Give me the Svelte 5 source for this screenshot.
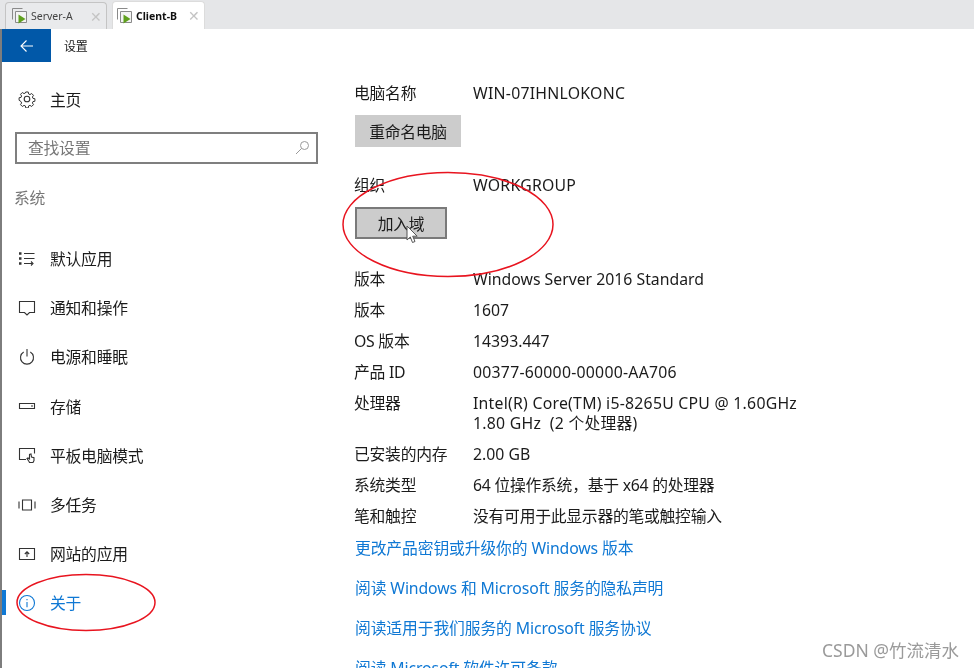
<script>
	const navItems = [
		{ label: '默认应用', icon: 'apps' },
		{ label: '通知和操作', icon: 'notify' },
		{ label: '电源和睡眠', icon: 'power' },
		{ label: '存储', icon: 'storage' },
		{ label: '平板电脑模式', icon: 'tablet' },
		{ label: '多任务', icon: 'multi' },
		{ label: '网站的应用', icon: 'web' },
		{ label: '关于', icon: 'about', active: true }
	];

	const specs = [
		{ key: '版本', value: 'Windows Server 2016 Standard', spacing: 'plain' },
		{ key: '版本', value: '1607', spacing: 'plain' },
		{ key: 'OS 版本', value: '14393.447', spacing: 'plain' },
		{ key: '产品 ID', value: '00377-60000-00000-AA706', spacing: 'wide' },
		{ key: '处理器', value: 'Intel(R) Core(TM) i5-8265U CPU @ 1.60GHz\n1.80 GHz  (2 个处理器)', spacing: 'wide' },
		{ key: '已安装的内存', value: '2.00 GB', spacing: 'plain' },
		{ key: '系统类型', value: '64 位操作系统，基于 x64 的处理器', spacing: '' },
		{ key: '笔和触控', value: '没有可用于此显示器的笔或触控输入', spacing: '' }
	];

	const links = [
		'更改产品密钥或升级你的 Windows 版本',
		'阅读 Windows 和 Microsoft 服务的隐私声明',
		'阅读适用于我们服务的 Microsoft 服务协议',
		'阅读 Microsoft 软件许可条款'
	];
</script>

{#snippet vmIcon()}
	<svg class="vm-icon" width="18" height="18" viewBox="0 0 18 18">
		<path d="M1.500 12.500v-11h10" fill="none" stroke="#8a8a8a" />
		<path d="M4.500 15.500v-11h11v11z" fill="#f4f4f4" stroke="#8a8a8a" />
		<path d="M7.500 7.500v9l7-4.500z" fill="#5fa01e" />
	</svg>
{/snippet}

<div class="page">
	<div class="tabs">
		<div class="tab">
			{@render vmIcon()}
			<span class="tab-name">Server-A</span>
			<span class="tab-x">✕</span>
		</div>
		<div class="tab current">
			{@render vmIcon()}
			<span class="tab-name">Client-B</span>
			<span class="tab-x">✕</span>
		</div>
	</div>

	<div class="window">
		<div class="titlebar">
			<div class="back">
				<svg width="16" height="14" viewBox="0 0 16 14" fill="none" stroke="#fff" stroke-width="1.100">
					<path d="M14 7H2M7.500 1.500 2 7l5.500 5.500" />
				</svg>
			</div>
			<span class="title">设置</span>
		</div>

		<div class="body">
			<aside class="sidebar">
				<div class="home">
					<svg class="nav-icon" width="18" height="18" viewBox="0 0 18 18" fill="none" stroke="#333" stroke-width="1.100">
						<circle cx="9" cy="9" r="2.800" />
						<path d="M7.600 1.200h2.800l.4 2.200 1.500.7 1.900-1.200 2 2-1.200 1.900.6 1.500 2.200.4v2.800l-2.200.4-.6 1.500 1.200 1.900-2 2-1.900-1.200-1.500.6-.4 2.200H7.600l-.4-2.200-1.500-.6-1.900 1.200-2-2 1.200-1.900-.6-1.500L.2 10.400V7.600l2.200-.4.6-1.500-1.200-1.900 2-2 1.900 1.200 1.500-.7z" transform="translate(.9 .9) scale(.9)" />
					</svg>
					<span>主页</span>
				</div>

				<div class="search">
					<span>查找设置</span>
					<svg width="15" height="15" viewBox="0 0 15 15" fill="none" stroke="#9a9a9a" stroke-width="1">
						<circle cx="9.500" cy="5.500" r="4" />
						<path d="M6.500 8.500 1 14" />
					</svg>
				</div>

				<div class="group">系统</div>

				<nav>
					{#each navItems as item}
						<div class="nav-item" class:active={item.active}>
							<svg class="nav-icon" width="18" height="18" viewBox="0 0 18 18" fill="none" stroke={item.active ? '#0f78d4' : '#333'} stroke-width="1.100">
								{#if item.icon === 'apps'}
									<path d="M1 3.500h2.500M1 8.500h2.500M1 13.500h2.500" stroke-width="2.600" />
									<path d="M6 3.500h10.500M6 8.500h10.500M6 13.500h8M13 11.500l2 2-2 2" />
								{:else if item.icon === 'notify'}
									<path d="M1.500 2.500h15v11h-5l-2.500 2.500-2.500-2.500h-5z" />
								{:else if item.icon === 'power'}
									<path d="M5.700 4a6.500 6.500 0 1 0 6.600 0M9 1v7.500" />
								{:else if item.icon === 'storage'}
									<path d="M1.500 6.500h15v5h-15z" />
									<path d="M13 9h2" />
								{:else if item.icon === 'tablet'}
									<path d="M8 13.500H1.500v-11h15v5" />
									<path d="M11 15.500l-2-3 1-.5 1.500 1V8.500l1.500-.5.500 3 2.500.7v2.800l-1 2h-3.500z" />
								{:else if item.icon === 'multi'}
									<path d="M4.500 4h9v10h-9zM1 5.500V12.500M17 5.500V12.500" />
								{:else if item.icon === 'web'}
									<path d="M1.500 3.500h15v11h-15zM9 12V7M6.800 9 9 6.800 11.200 9" />
								{:else}
									<circle cx="9" cy="9" r="7.500" />
									<path d="M9 5v1.300M9 8v5.200" />
								{/if}
							</svg>
							<span>{item.label}</span>
						</div>
					{/each}
				</nav>
			</aside>

			<main class="content">
				<div class="row first">
					<span class="key">电脑名称</span>
					<span class="wide">WIN-07IHNLOKONC</span>
				</div>
				<button class="btn rename">重命名电脑</button>

				<div class="row org">
					<span class="key">组织</span>
					<span class="wide">WORKGROUP</span>
				</div>
				<button class="btn join">加入域</button>

				<div class="specs">
					{#each specs as spec}
						<div class="row">
							<span class="key">{spec.key}</span>
							<span class="val {spec.spacing}">{spec.value}</span>
						</div>
					{/each}
				</div>

				<div class="links">
					{#each links as link}
						<span class="link">{link}</span>
					{/each}
				</div>
			</main>
		</div>
	</div>

	<!-- marks drawn on top of the screenshot -->
	<svg class="marks" width="974" height="668" viewBox="0 0 974 668" fill="none" stroke="#e8141f" stroke-width="1.500">
		<ellipse cx="448" cy="224.500" rx="105" ry="52" />
		<ellipse cx="86" cy="602.500" rx="69" ry="28" />
	</svg>
	<svg class="cursor" width="13" height="19" viewBox="0 0 13 19">
		<path d="M1 1v14l3.300-3 2.200 5.500 2.500-1-2.300-5.300h4.500z" fill="#fff" stroke="#555" />
	</svg>
	<span class="watermark">CSDN @竹流清水</span>
</div>

<style>
	:global(body) {
		background: #fff;
	}

	.page {
		position: relative;
		width: 974px;
		height: 668px;
		overflow: hidden;
		background: #fff;
		color: #1b1b1b;
		font-family: 'Noto Sans', 'Noto Sans CJK SC', sans-serif;
		font-size: 15.800px;
		letter-spacing: -0.25px;
		filter: blur(0.3px);
	}

	.tabs {
		display: flex;
		align-items: flex-end;
		gap: 5px;
		height: 29px;
		padding-left: 5px;
		background: #e5e6e8;
		box-sizing: border-box;
	}

	.tab {
		display: flex;
		align-items: center;
		width: 102px;
		height: 27px;
		padding-left: 5px;
		box-sizing: border-box;
		background: #e9eaec;
		border: 1px solid #c4c4c4;
		border-bottom: none;
		border-radius: 4px 4px 0 0;
		font-size: 10.500px;
		letter-spacing: 0;
		color: #444;
	}

	.tab.current {
		width: 93px;
		height: 28px;
		padding-left: 3px;
		background: #fff;
		border-color: #dcdcdc;
		color: #111;
		font-weight: 700;
	}

	.tab-name {
		margin-left: 2px;
	}

	.tab-x {
		margin-left: auto;
		margin-right: 4px;
		color: #c4c4c4;
		font-size: 14px;
		font-weight: 400;
	}

	.window {
		height: 639px;
		border-left: 2px solid #7d7d7d;
		box-sizing: border-box;
	}

	.titlebar {
		display: flex;
		align-items: center;
		height: 33px;
	}

	.back {
		display: flex;
		align-items: center;
		justify-content: center;
		width: 49px;
		height: 33px;
		background: #0158a8;
	}

	.title {
		margin-left: 13px;
		font-size: 12px;
	}

	.body {
		display: flex;
	}

	.sidebar {
		width: 353px;
		flex: none;
	}

	.home {
		display: flex;
		align-items: center;
		gap: 14px;
		height: 24px;
		margin: 25px 0 0 16px;
	}

	.search {
		display: flex;
		align-items: center;
		justify-content: space-between;
		width: 303px;
		height: 32px;
		margin: 21px 0 0 13px;
		padding: 0 6px 2px 11px;
		box-sizing: border-box;
		border: 2px solid #7f7f7f;
		color: #777;
	}

	.group {
		margin: 23px 0 0 12px;
		height: 22px;
		line-height: 22px;
		color: #777;
	}

	nav {
		margin-top: 25px;
	}

	.nav-item {
		position: relative;
		display: flex;
		align-items: center;
		gap: 14px;
		height: 49.200px;
		padding-left: 16px;
	}

	.nav-item.active {
		color: #0f78d4;
	}

	.nav-item.active::before {
		content: '';
		position: absolute;
		left: 0;
		top: 12px;
		width: 4px;
		height: 25px;
		background: #0f78d4;
	}

	.nav-icon {
		flex: none;
	}

	.content {
		padding-top: 19px;
		min-width: 0;
		margin-left: -1px;
	}

	.row {
		display: flex;
		line-height: 20px;
		padding: 5px 0 6px;
		box-sizing: border-box;
	}

	.row.first {
		height: 31px;
		padding: 2px 0 0;
	}

	.row.org {
		height: 30px;
		padding: 0;
		margin-top: 28px;
	}

	.key {
		width: 119px;
		flex: none;
	}

	.val {
		white-space: pre-wrap;
	}

	.plain {
		letter-spacing: 0;
	}

	.wide {
		letter-spacing: 0.25px;
	}

	.btn {
		display: block;
		height: 32px;
		padding: 0;
		font: inherit;
		letter-spacing: inherit;
		color: #1b1b1b;
		background: #ccc;
		border: none;
		box-sizing: border-box;
		margin-left: 1px;
	}

	.rename {
		width: 106px;
		margin-top: 3px;
	}

	.join {
		width: 92px;
		margin-top: 2px;
		border: 2px solid #7a7a7a;
	}

	.specs {
		margin-top: 25px;
	}

	.links {
		display: flex;
		flex-direction: column;
		gap: 20px;
		margin-top: 6px;
		margin-left: 1px;
		line-height: 20px;
		color: #0f78d4;
		white-space: nowrap;
		letter-spacing: -0.12px;
	}

	.marks,
	.cursor,
	.watermark {
		position: absolute;
	}

	.marks {
		left: 0;
		top: 0;
	}

	.cursor {
		left: 406px;
		top: 225px;
	}

	.watermark {
		right: 15px;
		top: 637px;
		font-size: 17.500px;
		letter-spacing: 0;
		color: #9a9a9a;
		white-space: nowrap;
	}
</style>
